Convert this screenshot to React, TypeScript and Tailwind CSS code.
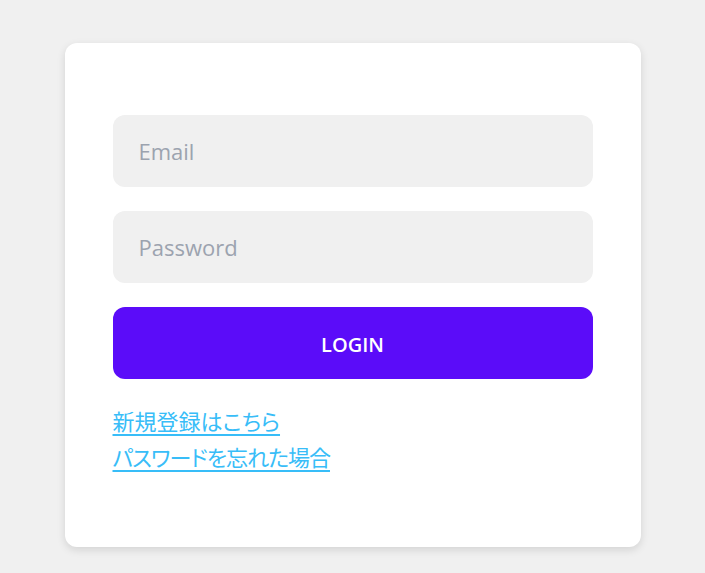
export default function App() {
  return (
    <div
      className="min-h-[573px] w-full bg-[#f0f0f0] flex justify-center pt-[43px]"
      style={{ fontFamily: '"Open Sans", "Noto Sans CJK JP", sans-serif' }}
    >
      <div className="w-[576px] h-[504px] bg-white rounded-xl shadow-[0_3px_8px_rgba(0,0,0,0.12)] px-12 pt-[72px] pb-[72px] flex flex-col">
        <input
          type="text"
          placeholder="Email"
          className="h-[72px] w-full rounded-xl bg-[#f0f0f0] pl-[26px] pr-6 text-[22px] text-gray-700 placeholder:text-[#9ca3af] outline-none"
        />
        <input
          type="password"
          placeholder="Password"
          className="mt-6 h-[72px] w-full rounded-xl bg-[#f0f0f0] pl-[26px] pr-6 text-[22px] text-gray-700 placeholder:text-[#9ca3af] outline-none"
        />
        <button className="mt-6 h-[72px] w-full rounded-xl bg-[#5b0cf9] pt-[3px] text-white text-[20px] font-semibold">
          LOGIN
        </button>
        <div className="mt-6 flex flex-col items-start text-[22px] leading-[36px] text-[#38bdf8] [font-feature-settings:'palt']">
          <a href="#" className="underline underline-offset-4">新規登録はこちら</a>
          <a href="#" className="underline underline-offset-4 tracking-[-1px]">パスワードを忘れた場合</a>
        </div>
      </div>
    </div>
  );
}
